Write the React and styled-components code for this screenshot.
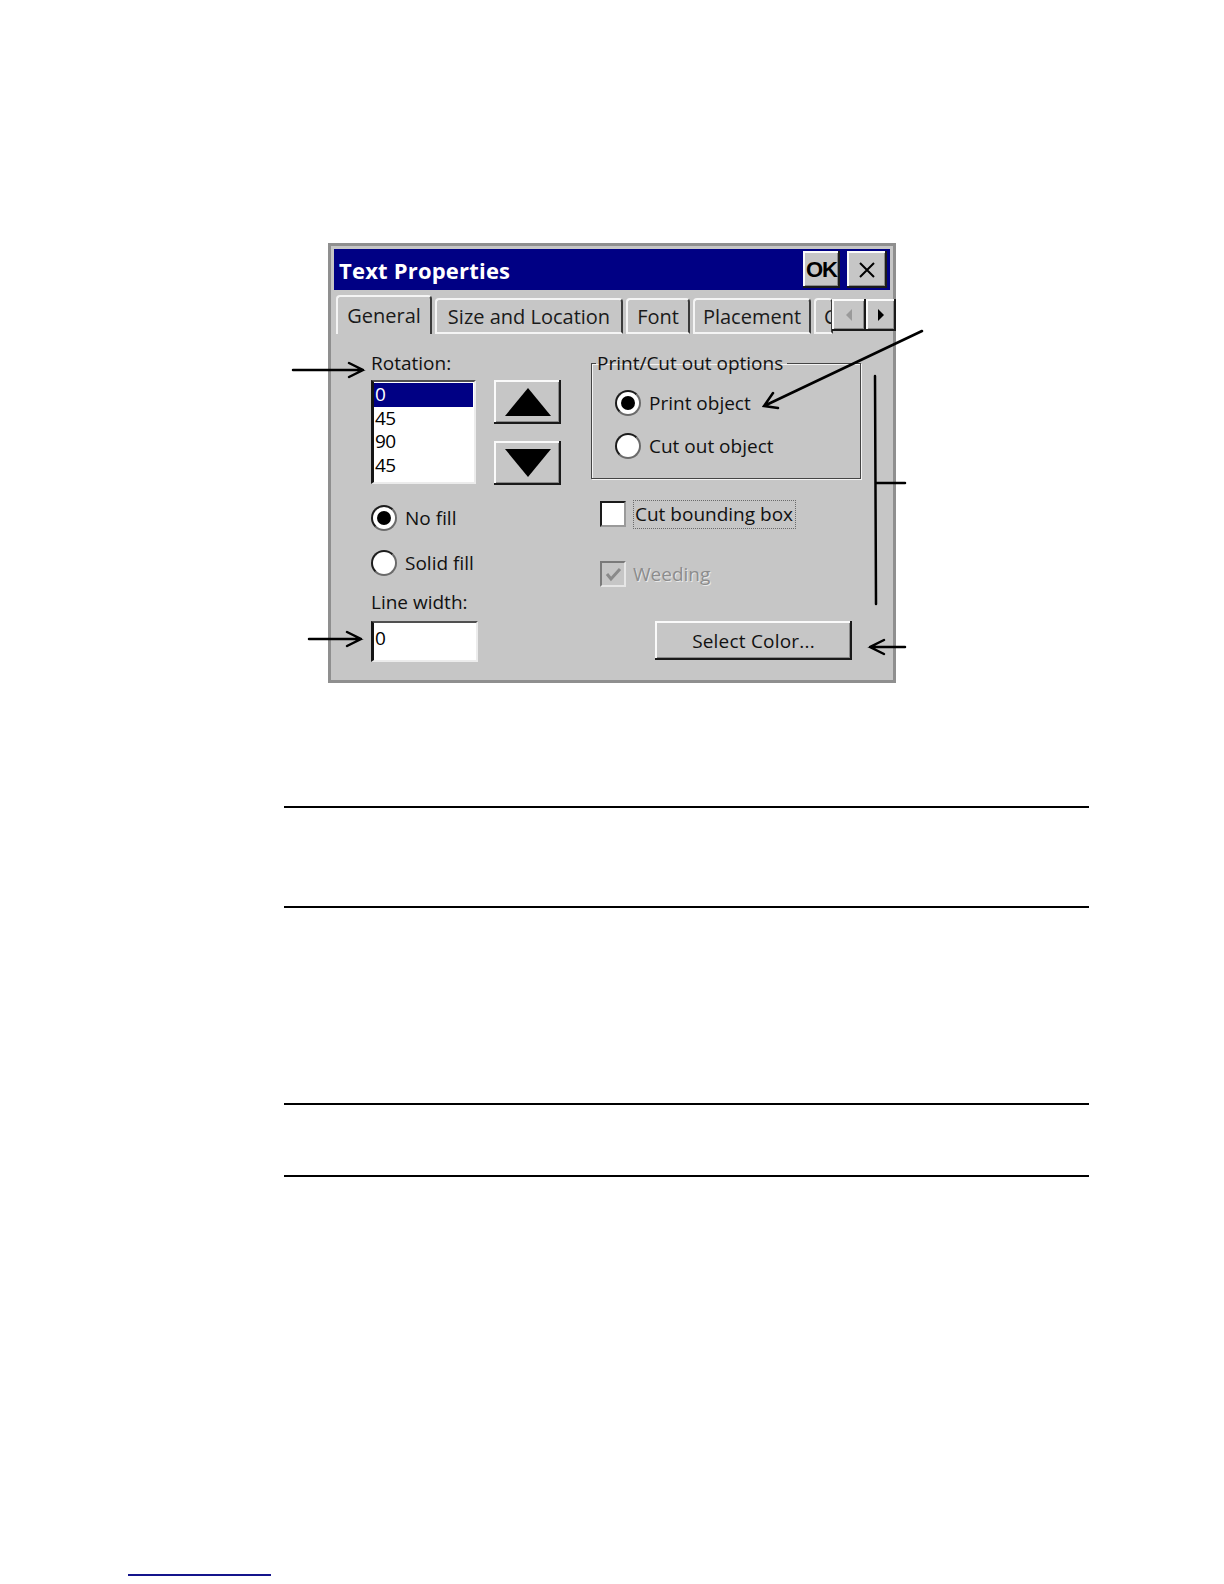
import React from "react";
import styled, { createGlobalStyle, css } from "styled-components";

const GlobalStyle = createGlobalStyle`
  html, body {
    margin: 0;
    padding: 0;
    background: #fff;
  }
`;

const FACE = "#c6c6c6";

// classic raised / sunken bevels
const raised = css`
  background: ${FACE};
  box-shadow: inset -2px -2px 0 #1a1a1a, inset 2px 2px 0 #fafafa,
    inset -3px -3px 0 #8a8a8a;
`;

const sunken = css`
  border-top: 2px solid #505050;
  border-left: 3px solid #151515;
  border-right: 2px solid #ececec;
  border-bottom: 2px solid #ececec;
  box-sizing: border-box;
`;

const Page = styled.div`
  position: relative;
  width: 1224px;
  height: 1584px;
  box-sizing: border-box;
  padding-top: 243px;
  overflow: hidden;
  font-family: "Open Sans", "DejaVu Sans", sans-serif;
  color: #111;
`;

const Dialog = styled.div`
  margin-left: 328px;
  width: 568px;
  height: 440px;
  box-sizing: border-box;
  border: 3px solid #8f8f8f;
  padding: 3px;
  background: ${FACE};
  display: flex;
  flex-direction: column;
`;

const TitleBar = styled.div`
  height: 41px;
  flex: none;
  background: #000084;
  display: flex;
  align-items: center;
  padding: 0 3px 0 5px;
  gap: 7px;
`;

const TitleText = styled.div`
  flex: 1;
  color: #fff;
  font-weight: 700;
  font-size: 22px;
  letter-spacing: 0.2px;
`;

const TitleButton = styled.div`
  ${raised};
  width: ${(p) => p.$w}px;
  height: 37px;
  display: flex;
  align-items: center;
  justify-content: center;
  font-family: "Liberation Sans", Arial, sans-serif;
  font-weight: 700;
  font-size: 22px;
  color: #000;
  letter-spacing: -1px;
`;

const TabStrip = styled.div`
  height: 44px;
  flex: none;
  display: flex;
  align-items: flex-end;
  padding-left: 2px;
  gap: 3px;
`;

const Tab = styled.div`
  width: ${(p) => p.$w}px;
  height: ${(p) => (p.$active ? 39 : 36)}px;
  box-sizing: border-box;
  flex: none;
  border-top: 2px solid #f4f4f4;
  border-left: 2px solid #f4f4f4;
  border-right: 2px solid #3a3a3a;
  border-bottom: ${(p) => (p.$active ? "none" : "2px solid #f4f4f4")};
  border-radius: 4px 4px 0 0;
  display: flex;
  align-items: center;
  justify-content: ${(p) => (p.$clip ? "flex-start" : "center")};
  padding-left: ${(p) => (p.$clip ? 8 : 0)}px;
  padding-top: 1px;
  padding-bottom: ${(p) => (p.$active ? 1 : 0)}px;
  font-size: 20px;
  color: #1a1a1a;
  white-space: nowrap;
  overflow: hidden;
`;

const ScrollButton = styled.div`
  ${raised};
  width: ${(p) => p.$w}px;
  height: 32px;
  flex: none;
  margin-bottom: 3px;
  margin-left: ${(p) => p.$ml || 0}px;
  display: flex;
  align-items: center;
  justify-content: center;
`;

const Body = styled.div`
  flex: 1;
  display: flex;
  padding: 18px 0 0 37px;
  gap: 30px;
`;

const LeftCol = styled.div`
  width: 190px;
  display: flex;
  flex-direction: column;
`;

const Label = styled.div`
  font-size: 19px;
  line-height: 22px;
  margin-top: ${(p) => p.$mt || 0}px;
`;

const ListRow = styled.div`
  display: flex;
  gap: 18px;
  margin-top: 6px;
`;

const ListBox = styled.div`
  ${sunken};
  width: 106px;
  height: 104px;
  background: #fff;
  padding-top: 1px;
  padding-right: 1px;
`;

const ListItem = styled.div`
  height: 23.5px;
  line-height: 23px;
  font-size: 19px;
  padding-left: 1px;
  letter-spacing: -0.5px;
  background: ${(p) => (p.$selected ? "#000084" : "transparent")};
  color: ${(p) => (p.$selected ? "#fff" : "#000")};
`;

const SpinCol = styled.div`
  display: flex;
  flex-direction: column;
  gap: 17px;
`;

const SpinButton = styled.div`
  ${raised};
  width: 67px;
  height: 44px;
  display: flex;
  align-items: center;
  justify-content: center;
`;

const RadioRow = styled.div`
  display: flex;
  align-items: center;
  gap: 8px;
  height: 26px;
  margin-top: ${(p) => p.$mt || 0}px;
  font-size: 19px;
`;

const Radio = styled.div`
  width: 26px;
  height: 26px;
  box-sizing: border-box;
  border-radius: 50%;
  background: #fff;
  border: 2px solid #1c1c1c;
  border-right-color: #6a6a6a;
  border-bottom-color: #6a6a6a;
  flex: none;
  display: flex;
  align-items: center;
  justify-content: center;

  &::after {
    content: "";
    display: ${(p) => (p.$checked ? "block" : "none")};
    width: 14px;
    height: 14px;
    border-radius: 50%;
    background: #000;
  }
`;

const TextBox = styled.div`
  ${sunken};
  width: 107px;
  height: 41px;
  margin-top: 8px;
  background: #fff;
  font-size: 19px;
  line-height: 30px;
  padding-left: 1px;
  color: #000;
`;

const RightCol = styled.div`
  width: 270px;
  display: flex;
  flex-direction: column;
`;

const GroupBox = styled.fieldset`
  margin: 0;
  padding: 0;
  border: 1px solid #444;
  box-shadow: 1px 1px 0 #f4f4f4, inset 1px 1px 0 #f4f4f4;
`;

const Legend = styled.legend`
  margin-left: 4px;
  padding: 0 4px 0 1px;
  font-size: 19px;
  line-height: 22px;
`;

const GroupInner = styled.div`
  padding: 16px 0 19px 23px;
`;

const CheckRow = styled.div`
  display: flex;
  align-items: center;
  gap: 7px;
  height: 26px;
  margin-top: ${(p) => p.$mt}px;
  padding-left: 9px;
  font-size: 19px;
  color: ${(p) => (p.$disabled ? "#8c8c8c" : "#111")};
  text-shadow: ${(p) => (p.$disabled ? "1px 1px 0 #e8e8e8" : "none")};
`;

const CheckBox = styled.div`
  width: 26px;
  height: 26px;
  box-sizing: border-box;
  flex: none;
  background: ${(p) => (p.$disabled ? FACE : "#fff")};
  border-top: 2px solid ${(p) => (p.$disabled ? "#7a7a7a" : "#1a1a1a")};
  border-left: 2px solid ${(p) => (p.$disabled ? "#7a7a7a" : "#1a1a1a")};
  border-right: 2px solid ${(p) => (p.$disabled ? "#e6e6e6" : "#9a9a9a")};
  border-bottom: 2px solid ${(p) => (p.$disabled ? "#e6e6e6" : "#9a9a9a")};
  display: flex;
  align-items: center;
  justify-content: center;
`;

const FocusLabel = styled.div`
  border: 1px dotted #6a6a6a;
  padding: 0 2px 0 1px;
  line-height: 27px;
`;

const PushButton = styled.div`
  ${raised};
  width: 197px;
  height: 39px;
  margin-top: 34px;
  margin-left: 64px;
  display: flex;
  align-items: center;
  justify-content: center;
  font-size: 19px;
  letter-spacing: 0.2px;
`;

const Callouts = styled.svg`
  position: absolute;
  left: 0;
  top: 0;
  pointer-events: none;
`;

const Rules = styled.div`
  margin-left: 284px;
  width: 805px;
`;

const Rule = styled.div`
  height: 2px;
  background: #000;
  margin-top: ${(p) => p.$gap}px;
`;

const FootLine = styled.div`
  margin-left: 128px;
  width: 143px;
  height: 2px;
  background: #14148c;
  margin-top: ${(p) => p.$gap}px;
`;

const tabs = [
  { label: "General", w: 96, active: true },
  { label: "Size and Location", w: 188 },
  { label: "Font", w: 64 },
  { label: "Placement", w: 118 },
];

const angles = ["0", "45", "90", "45"];

function Triangle({ up }) {
  return (
    <svg width="48" height="30" viewBox="0 0 48 30">
      <polygon points={up ? "24,1 47,29 1,29" : "1,1 47,1 24,29"} fill="#000" />
    </svg>
  );
}

function App() {
  return (
    <Page>
      <GlobalStyle />
      <Dialog>
        <TitleBar>
          <TitleText>Text Properties</TitleText>
          <TitleButton $w={37}>OK</TitleButton>
          <TitleButton $w={40}>
            <svg width="20" height="20" viewBox="0 0 20 20">
              <path d="M3 3 L17 17 M17 3 L3 17" stroke="#000" strokeWidth="2" />
            </svg>
          </TitleButton>
        </TitleBar>

        <TabStrip>
          {tabs.map((t) => (
            <Tab key={t.label} $w={t.w} $active={t.active}>
              {t.label}
            </Tab>
          ))}
          <Tab $w={19} $clip>
            Color
          </Tab>
          <ScrollButton $w={34} $ml={-4}>
            <svg width="8" height="12" viewBox="0 0 8 12">
              <polygon points="7,0 7,12 1,6" fill="#9a9a9a" />
            </svg>
          </ScrollButton>
          <ScrollButton $w={30} $ml={-3}>
            <svg width="8" height="12" viewBox="0 0 8 12">
              <polygon points="1,0 1,12 7,6" fill="#000" />
            </svg>
          </ScrollButton>
        </TabStrip>

        <Body>
          <LeftCol>
            <Label>Rotation:</Label>
            <ListRow>
              <ListBox>
                {angles.map((a, i) => (
                  <ListItem key={i} $selected={i === 0}>
                    {a}
                  </ListItem>
                ))}
              </ListBox>
              <SpinCol>
                <SpinButton>
                  <Triangle up />
                </SpinButton>
                <SpinButton>
                  <Triangle />
                </SpinButton>
              </SpinCol>
            </ListRow>

            <RadioRow $mt={20}>
              <Radio $checked />
              No fill
            </RadioRow>
            <RadioRow $mt={19}>
              <Radio />
              Solid fill
            </RadioRow>

            <Label $mt={15}>Line width:</Label>
            <TextBox>0</TextBox>
          </LeftCol>

          <RightCol>
            <GroupBox>
              <Legend>Print/Cut out options</Legend>
              <GroupInner>
                <RadioRow>
                  <Radio $checked />
                  Print object
                </RadioRow>
                <RadioRow $mt={17}>
                  <Radio />
                  Cut out object
                </RadioRow>
              </GroupInner>
            </GroupBox>

            <CheckRow $mt={22}>
              <CheckBox />
              <FocusLabel>Cut bounding box</FocusLabel>
            </CheckRow>
            <CheckRow $mt={34} $disabled>
              <CheckBox $disabled>
                <svg width="17" height="15" viewBox="0 0 17 15">
                  <path d="M2 7 L6 12 L15 2" stroke="#8a8a8a" strokeWidth="3" fill="none" />
                </svg>
              </CheckBox>
              <span>Weeding</span>
            </CheckRow>

            <PushButton>Select Color...</PushButton>
          </RightCol>
        </Body>
      </Dialog>

      <Rules>
        <Rule $gap={123} />
        <Rule $gap={98} />
        <Rule $gap={195} />
        <Rule $gap={70} />
      </Rules>
      <FootLine $gap={397} />

      <Callouts width="1224" height="1584" viewBox="0 0 1224 1584">
        <g stroke="#000" strokeWidth="2.5" fill="none" strokeLinecap="round">
          {/* Rotation */}
          <path d="M293 370 H363 M349 363 L363 370 L349 377" />
          {/* Line width */}
          <path d="M309 639 H361 M347 632 L361 639 L347 646" />
          {/* Print object */}
          <path d="M922 331 L764 406 M778 408 L764 406 L773 393" />
          {/* right bracket */}
          <path d="M875 376 L876 604 M876 483 H905" />
          {/* Select Color */}
          <path d="M905 647 H870 M884 640 L870 647 L884 654" />
        </g>
      </Callouts>
    </Page>
  );
}

export default App;
